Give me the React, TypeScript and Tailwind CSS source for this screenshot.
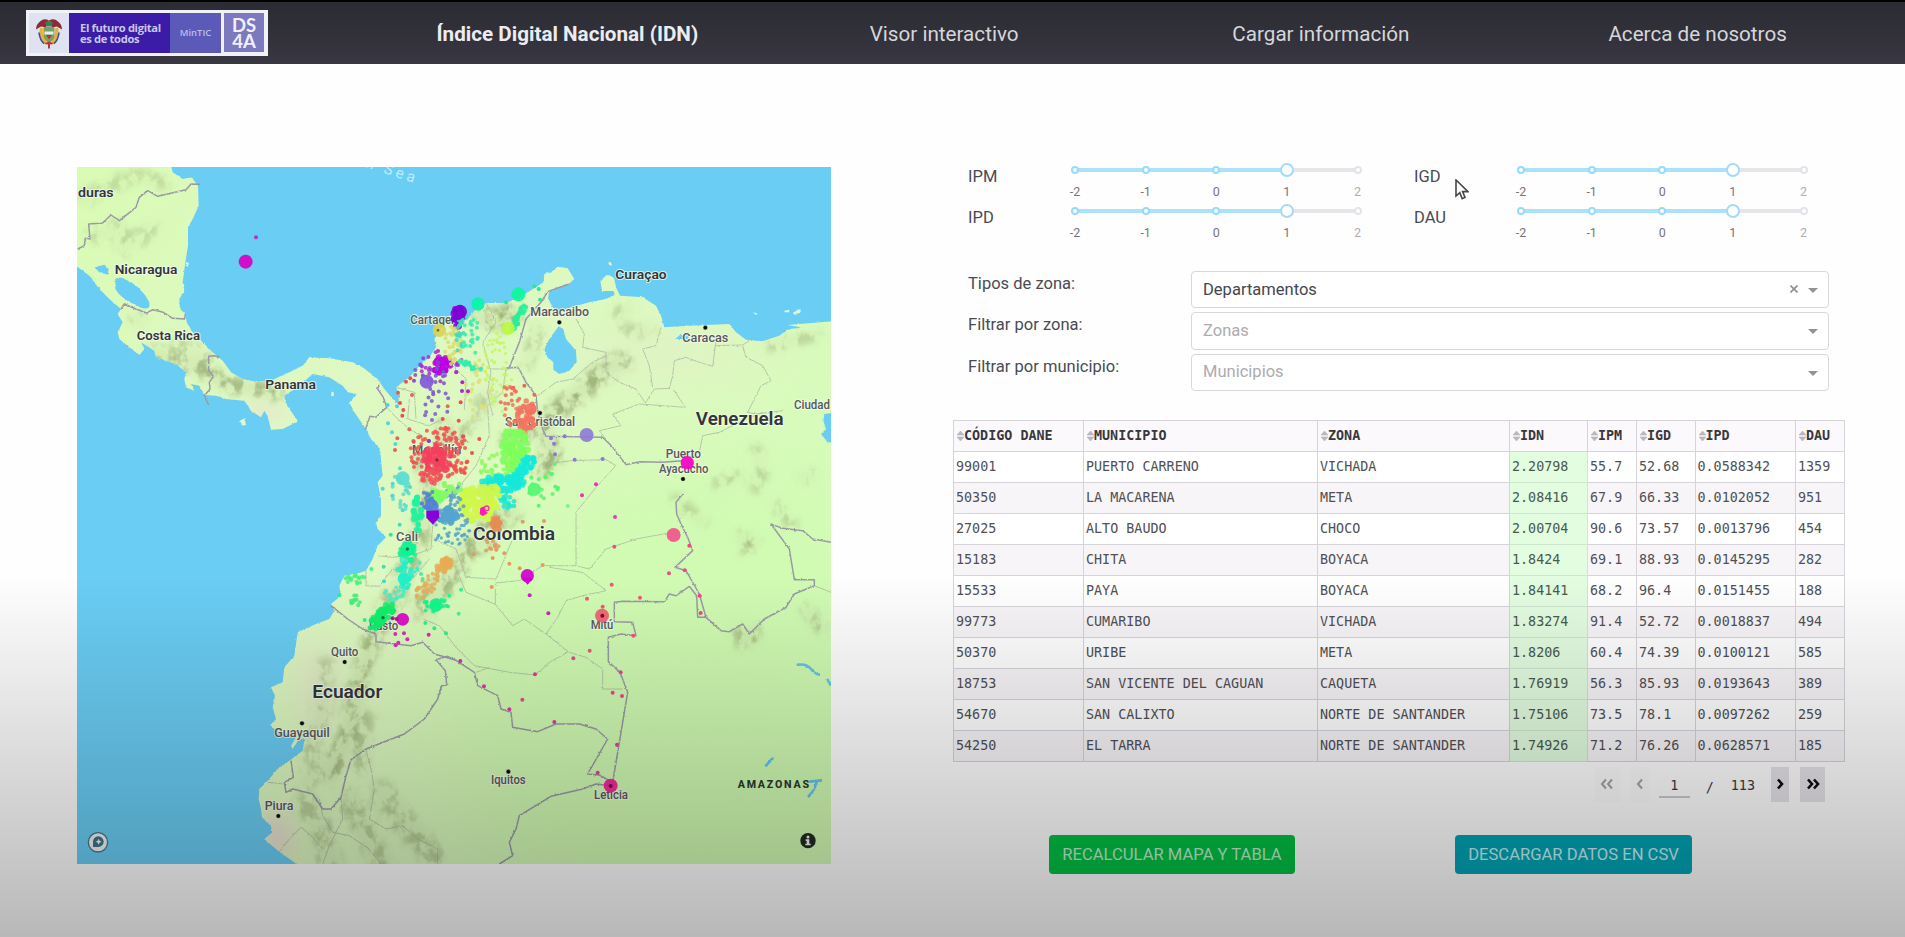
import React from "react";

const SANS = "font-['Roboto','Liberation_Sans',sans-serif]";
const MONO = "font-['DejaVu_Sans_Mono','Liberation_Mono',monospace]";

/* ---------- Map data (3 units per pixel) ---------- */

const LAND =
  "M0 0H285L290 20 320 40 345 35 358 50 366 62 368 120 350 160 336 185 336 240 328 290 320 350 325 375 310 400 312 430 328 445 332 470 350 500 385 535 410 560 440 585 465 620 500 640 540 648 590 642 640 620 680 600 700 575 760 578 830 590 860 605 905 640 925 670 950 700 965 715 972 690 960 665 1000 635 1030 600 1060 575 1080 545 1075 520 1085 500 1100 470 1120 450 1140 462 1170 465 1200 430 1230 412 1290 412 1330 395 1380 365 1402 350 1405 325 1425 320 1445 303 1475 308 1495 340 1478 355 1420 375 1416 398 1430 425 1445 440 1475 428 1540 410 1590 400 1618 388 1612 376 1578 376 1573 345 1592 328 1614 335 1620 365 1632 390 1700 395 1740 420 1755 450 1765 485 1840 480 1960 475 1980 500 2010 522 2060 527 2110 510 2140 490 2180 486 2135 478 2270 467V2100H665L655 2090 610 2058 565 2020 590 2000 585 1980 558 1955 555 1930 548 1900 550 1870 575 1845 610 1805 640 1785 680 1755 686 1718 668 1722 650 1750 645 1740 660 1715 600 1695 583 1678 600 1660 590 1625 597 1590 585 1565 620 1550 625 1505 655 1470 665 1400 720 1375 760 1360 775 1335 765 1315 795 1290 790 1260 805 1230 850 1222 870 1215 890 1180 905 1140 930 1115 905 1090 900 1070 915 1050 915 1000 905 950 920 930 912 850 885 820 870 790 835 740 820 710 845 685 815 680 800 660 760 635 710 625 670 660 625 690 630 715 665 765 650 775 620 790 585 792 575 750 565 735 555 755 525 735 505 705 450 700 420 690 385 688 370 660 345 655 355 675 330 665 325 640 330 620 300 595 240 575 235 555 195 530 205 550 190 568 160 545 130 520 125 500 140 470 125 445 135 430 100 400 70 370 40 330 0 300Z";

const LAKES = [
  "M118 340Q130 330 150 342Q195 360 220 410V425Q205 435 180 418Q135 400 118 370Z",
  "M55 305 85 297 98 310 95 327 70 320Z",
  "M1448 482 1462 490 1470 520 1500 555 1502 590 1480 615 1450 625 1432 612 1432 590 1410 570 1405 550 1420 520Z",
  "M1798 520 1812 508 1840 510 1835 520Z",
  "M2245 745 2270 742V830H2255L2235 805 2250 790 2242 765Z",
];

const ISLANDS = [
  "M492 765 505 758 510 778 500 780Z",
  "M766 678 773 680 774 690 766 692Z",
  "M331 288 338 292 336 303 329 300Z",
  "M2150 442 2170 430 2175 438 2158 448Z",
  "M2125 435 2140 432 2140 440 2126 440Z",
  "M1596 290 1605 291 1608 300 1600 298Z",
  "M2030 440 2045 444 2040 448Z",
  "M140 386 158 394 156 399 143 391Z",
];

const BORDERS = [
  "M5 250 25 240 28 218 42 220 38 175 80 172 105 148 130 165 180 125 190 95 215 75 245 92 330 72 345 55 372 56",
  "M135 430 145 415 180 430 212 442 230 432 262 440 290 458 325 460 328 445",
  "M430 575 415 570 398 572 398 615 412 632 400 650 402 670 385 690 398 718",
  "M910 657 905 670 922 695 932 725 915 740 900 755 882 752 868 792",
  "M1478 355 1415 378 1395 410 1350 460 1330 530 1300 605 1290 608 1325 605 1335 620 1350 650 1380 690 1385 740 1400 790 1410 812 1580 815 1610 845 1650 897 1690 888 1760 890 1820 885",
  "M1820 985 1800 1010 1802 1045 1815 1075 1835 1115 1850 1155 1797 1205 1830 1215 1870 1285 1890 1355 1935 1395 1960 1398 2000 1375 2020 1405 2065 1360 2130 1325 2155 1285 2215 1260V1242H2155L2140 1150 2085 1075 2120 1088 2180 1095 2210 1120 2265 1130",
  "M1890 1355 1865 1355 1862 1290 1840 1262 1800 1290 1780 1285 1765 1308 1640 1307 1615 1310V1368L1670 1370 1680 1410 1635 1405 1597 1415V1488L1632 1520 1655 1580 1610 1850",
  "M765 1320 815 1360 860 1390 900 1405 900 1428 960 1435 1005 1440 1040 1430 1075 1465 1140 1484 1195 1520 1205 1560 1265 1590 1275 1630 1305 1640 1310 1685 1385 1698 1440 1675 1510 1675 1560 1690 1595 1720 1535 1825 1570 1828 1600 1845 1605 1860",
  "M1605 1860 1560 1855 1520 1870 1425 1892 1330 1950 1320 1990 1300 2030 1310 2070 1270 2095",
  "M1080 1482 1108 1515 1112 1558 1097 1560 1085 1600 1045 1660 985 1705 870 1750 825 1782 810 1830 795 1895 765 1930 740 1930 710 1885 650 1870 630 1880 625 1850 652 1835 645 1785M1080 1482 1115 1472 1140 1484",
];

const REGIONS = [
  "M1500 460 1525 505 1520 545 1590 560 1590 620 1630 650 1680 670 1708 712 1735 670 1780 668 1790 630 1795 585 1830 575 1870 590 1910 602 1918 540 1920 525",
  "M1755 485 1740 540 1700 550 1720 600 1730 665",
  "M1790 668 1828 725 1760 720 1690 715 1610 745 1635 780 1570 795 1610 845",
  "M2000 540 2010 575 2060 600 2085 645 2055 660 2015 740 2040 745 2120 735",
  "M1918 540 2000 538 2020 525",
  "M2060 740 2010 760 1930 800 1880 810 1870 860 1830 880",
  "M1400 895 1490 885 1590 882 1620 900 1560 965 1500 1040 1500 1200",
  "M932 725 965 760 1000 790 1060 825 1095 840 1130 810 1180 830",
  "M1000 700 995 760 1060 780 1090 765",
  "M1230 412 1260 470 1220 530 1245 620 1235 680 1250 750",
  "M1290 610 1280 680 1235 720 1240 810 1200 900 1160 950 1150 1040",
  "M1385 690 1440 650 1490 640 1550 590 1590 570",
  "M905 1170 950 1175 1020 1165 1065 1150 1070 1080 1110 1040",
  "M870 1215 870 1260 910 1262 950 1210 1010 1240 1060 1180",
  "M1075 1120 1140 1150 1170 1235 1260 1240 1310 1120",
  "M1140 1210 1170 1280 1258 1316 1310 1380 1345 1360 1410 1405 1445 1355 1470 1305 1520 1290 1590 1275 1520 1220 1420 1205",
  "M1258 1316V1252L1330 1245 1400 1200 1500 1200 1540 1210 1590 1150 1680 1120 1790 1100",
  "M1410 1405 1480 1460 1530 1475 1580 1510 1580 1570 1640 1570",
  "M1140 1445 1195 1500 1300 1520 1380 1528 1420 1490 1475 1460",
  "M1200 1520 1240 1505",
  "M1040 1360 1090 1380 1140 1445",
  "M870 1750 885 1810 895 1870 880 1960 930 1990 980 1980 1025 2020 1085 2050V2095",
  "M795 1895 800 1960 760 2040 740 2095M610 2058 640 2020 675 1985 705 2010 740 2050M575 1850 620 1855",
  "M730 1900 740 1950 770 2000 820 2010 880 2050 915 2095M2215 1260 2265 1280",
  "M960 665 1015 680 1020 760M1120 590 1170 640 1165 730M1235 610 1300 610",
];

const RELIEF = [
  { d: "M230 565 300 580 350 595 400 625 450 655 520 665 600 680", w: 44, o: 0.9 },
  { d: "M300 530 370 560 400 590M175 455 190 470", w: 30, o: 0.6 },
  { d: "M1300 820 1390 780 1440 735 1500 690 1560 640 1600 600 1640 590", w: 56, o: 1 },
  { d: "M1350 600 1370 540 1390 490", w: 30, o: 0.7 },
  { d: "M1225 455 1270 465 1310 445", w: 64, o: 1 },
  { d: "M1400 910 1430 880 1420 820", w: 56, o: 1 },
  { d: "M1040 1330 1100 1260 1160 1170 1220 1110 1300 1040", w: 66, o: 0.9 },
  { d: "M920 1360 970 1260 1010 1170 1040 1080 1060 960 1050 880", w: 56, o: 0.85 },
  { d: "M1100 780 1110 840 1200 760 1230 690", w: 50, o: 0.5 },
  { d: "M900 1390 870 1480 850 1540 835 1620 820 1700 790 1760 765 1830", w: 52, o: 0.9 },
  { d: "M750 1500 740 1640 700 1760M690 1850 730 1790M870 1660 850 1800", w: 50, o: 0.55 },
  { d: "M690 1920 740 1990 760 2090M820 1900 870 2000 920 2090M920 1880 1000 1990 1070 2070", w: 70, o: 0.55 },
  { d: "M2080 540 2220 510M1620 440 1660 430M1640 490 1720 500", w: 28, o: 0.6 },
  { d: "M2040 850 2060 920 2040 970M1920 950 1990 935M1800 1000 1880 1070M2100 1020 2150 1080M2180 935 2210 930", w: 30, o: 0.55 },
  { d: "M2000 1110 2010 1155 2035 1130M1980 1400 2040 1395M1990 1430 2040 1425M2190 1330 2240 1390", w: 26, o: 0.85 },
  { d: "M20 100 100 60 180 30 260 50M50 210 110 200 200 220M120 180 150 250M190 210 230 190", w: 44, o: 0.4 },
];

type Cluster = { x: number; y: number; rx: number; ry: number; n: number; r: number; c: string; rot?: number };

const CLUSTERS: Cluster[] = [
  { x: 1090, y: 865, rx: 92, ry: 82, n: 130, r: 6, c: "#f0524f" },
  { x: 1082, y: 880, rx: 42, ry: 40, n: 60, r: 8, c: "#f4405e" },
  { x: 1075, y: 930, rx: 45, ry: 24, n: 24, r: 7, c: "#f2525a" },
  { x: 1098, y: 598, rx: 26, ry: 28, n: 34, r: 9, c: "#bb00e4" },
  { x: 1100, y: 605, rx: 72, ry: 48, n: 24, r: 6, c: "#a32ddb" },
  { x: 1065, y: 650, rx: 66, ry: 64, n: 16, r: 6, c: "#7c4fd0" },
  { x: 1085, y: 720, rx: 48, ry: 48, n: 12, r: 6, c: "#7a58d0" },
  { x: 1145, y: 455, rx: 16, ry: 30, n: 20, r: 9, c: "#8a00d8" },
  { x: 1130, y: 540, rx: 28, ry: 58, n: 34, r: 6, c: "#d9dc70" },
  { x: 1150, y: 510, rx: 14, ry: 50, n: 16, r: 6, c: "#3fdcb8" },
  { x: 1185, y: 500, rx: 36, ry: 66, n: 24, r: 6, c: "#35edb0" },
  { x: 1187, y: 602, rx: 42, ry: 8, n: 24, r: 6, c: "#35ecac", rot: 24 },
  { x: 1328, y: 455, rx: 50, ry: 9, n: 26, r: 7, c: "#25f09a", rot: -62 },
  { x: 1210, y: 670, rx: 42, ry: 90, n: 26, r: 6, c: "#dfe078" },
  { x: 1265, y: 610, rx: 44, ry: 150, n: 56, r: 5, c: "#c8f56a" },
  { x: 1298, y: 690, rx: 34, ry: 30, n: 14, r: 6, c: "#ee6b55" },
  { x: 1350, y: 750, rx: 30, ry: 48, n: 38, r: 8, c: "#f37562" },
  { x: 1325, y: 745, rx: 48, ry: 40, n: 12, r: 6, c: "#f37562" },
  { x: 1315, y: 850, rx: 42, ry: 66, n: 90, r: 9, c: "#7eff5c" },
  { x: 1265, y: 905, rx: 62, ry: 44, n: 40, r: 6, c: "#8dfa60" },
  { x: 1345, y: 905, rx: 64, ry: 18, n: 55, r: 8, c: "#14eadb", rot: -52 },
  { x: 1280, y: 952, rx: 64, ry: 22, n: 64, r: 9, c: "#14e8da" },
  { x: 1298, y: 995, rx: 30, ry: 34, n: 26, r: 7, c: "#1de8d2" },
  { x: 1205, y: 1018, rx: 58, ry: 54, n: 95, r: 10, c: "#d0f84a" },
  { x: 1240, y: 980, rx: 36, ry: 28, n: 26, r: 9, c: "#cdf650" },
  { x: 1132, y: 1000, rx: 38, ry: 50, n: 36, r: 6, c: "#5aa0c6" },
  { x: 1115, y: 1050, rx: 34, ry: 26, n: 30, r: 8, c: "#55a5cf" },
  { x: 1125, y: 1090, rx: 64, ry: 50, n: 46, r: 5, c: "#5ba3c4" },
  { x: 1085, y: 990, rx: 28, ry: 20, n: 26, r: 9, c: "#7dff62" },
  { x: 1125, y: 965, rx: 32, ry: 22, n: 14, r: 7, c: "#8cf66a" },
  { x: 1055, y: 1002, rx: 22, ry: 32, n: 24, r: 6, c: "#5583cf" },
  { x: 1025, y: 1045, rx: 14, ry: 52, n: 34, r: 8, c: "#1df3a0" },
  { x: 978, y: 975, rx: 32, ry: 60, n: 20, r: 6, c: "#5edbd0" },
  { x: 995, y: 1160, rx: 24, ry: 30, n: 30, r: 7, c: "#1cf098" },
  { x: 985, y: 1230, rx: 24, ry: 42, n: 34, r: 7, c: "#25efc4" },
  { x: 1000, y: 1190, rx: 32, ry: 40, n: 14, r: 6, c: "#3decc8" },
  { x: 958, y: 1285, rx: 34, ry: 26, n: 20, r: 6, c: "#4decc4" },
  { x: 1105, y: 1200, rx: 28, ry: 18, n: 22, r: 8, c: "#e6ae58", rot: -40 },
  { x: 1055, y: 1260, rx: 52, ry: 22, n: 36, r: 6, c: "#e3b05c", rot: -50 },
  { x: 1262, y: 1075, rx: 18, ry: 24, n: 20, r: 8, c: "#e5935c" },
  { x: 1235, y: 1140, rx: 36, ry: 18, n: 12, r: 6, c: "#e39a62" },
  { x: 918, y: 1350, rx: 52, ry: 20, n: 62, r: 8, c: "#10f06c", rot: -48 },
  { x: 840, y: 1240, rx: 36, ry: 14, n: 16, r: 6, c: "#45f27c" },
  { x: 840, y: 1305, rx: 18, ry: 18, n: 10, r: 6, c: "#40f078" },
  { x: 1080, y: 1320, rx: 40, ry: 24, n: 16, r: 6, c: "#1cf28c" },
  { x: 1400, y: 960, rx: 46, ry: 50, n: 16, r: 6, c: "#58f46c" },
];

const BUBBLES: [number, number, number, string][] = [
  [509, 288, 21, "#d900c4"], [1152, 438, 21, "#7d00d6"], [1145, 450, 14, "#7d00d6"], [1206, 415, 20, "#0af3ac"],
  [1327, 386, 21, "#0cf79a"], [1090, 494, 20, "#d6d45a"], [1296, 488, 20, "#bdf847"], [1052, 648, 21, "#8359dc"],
  [1364, 730, 18, "#f37161"], [1532, 808, 21, "#8f7cd3"], [1834, 891, 20, "#fa00c6"], [980, 938, 21, "#5adbd2"],
  [1375, 971, 20, "#55f771"], [1067, 1022, 21, "#5280d4"], [1112, 1052, 18, "#56a4cf"], [995, 1150, 22, "#10f293"],
  [983, 1240, 18, "#20f0c6"], [1110, 1192, 18, "#e6ab54"], [1080, 1318, 20, "#0cf78c"], [980, 1361, 19, "#dd04c6"],
  [1354, 1230, 20, "#d400d1"], [1793, 1108, 21, "#f1568c"], [1578, 1350, 21, "#f35f72"], [1604, 1860, 21, "#f31c98"],
  [1260, 1072, 17, "#e58c55"],
];

const DOTS: [number, number, string][] = [
  [540, 215, "#c02fc4"], [990, 648, "#e85252"], [1003, 638, "#e85252"], [966, 681, "#e2604f"], [972, 712, "#e85252"],
  [982, 733, "#e85252"], [979, 750, "#e85252"], [1008, 688, "#e76650"], [1100, 760, "#e85252"], [1115, 722, "#e6724c"],
  [1000, 791, "#e6655a"], [964, 818, "#e6655a"], [957, 853, "#e6655a"], [936, 773, "#55d8d2"], [948, 800, "#55d8d2"],
  [958, 835, "#55d8d2"], [972, 908, "#55d8d2"], [950, 954, "#55d8d2"], [950, 990, "#55d8d2"], [920, 969, "#55d8d2"],
  [980, 1034, "#55d8d2"], [1002, 964, "#55d8d2"], [935, 718, "#55cfe2"], [963, 722, "#55cfe2"], [1013, 828, "#e85252"],
  [1014, 645, "#9b45d4"], [1086, 556, "#b634cf"], [1159, 650, "#a22dc9"], [1158, 676, "#a22dc9"], [1176, 677, "#a22dc9"],
  [1154, 710, "#e85252"], [1148, 765, "#e85252"], [1162, 812, "#e85252"], [1152, 845, "#e85252"], [1210, 820, "#ea5550"],
  [1188, 862, "#ea5550"], [1172, 890, "#ea5550"], [1166, 922, "#ea5550"], [1345, 660, "#ef6a55"], [1375, 687, "#ef6a55"],
  [1312, 666, "#ef6a55"], [1375, 362, "#23eb9b"], [1388, 370, "#23eb9b"], [1392, 402, "#23eb9b"], [1290, 410, "#23eb9b"],
  [1425, 818, "#8c79d5"], [1434, 834, "#8c79d5"], [1437, 866, "#8c79d5"], [1466, 812, "#8c79d5"], [1496, 882, "#8c79d5"],
  [1580, 880, "#8c79d5"], [1560, 956, "#ec32b8"], [1518, 989, "#ec32b8"], [1617, 1054, "#e93cae"], [1438, 963, "#55f771"],
  [1446, 966, "#55f771"], [1475, 1021, "#7ef28c"], [1388, 1020, "#55f771"], [1425, 925, "#55f771"], [1436, 895, "#55f771"],
  [1361, 1289, "#c428bf"], [1417, 1343, "#c428bf"], [1340, 1068, "#e59a62"], [1404, 1066, "#e59a62"], [1400, 1198, "#e59a62"],
  [1285, 1163, "#e59a62"], [1300, 1194, "#e59a62"], [1331, 1208, "#e59a62"], [1250, 1177, "#e59a62"], [1193, 1166, "#e59a62"],
  [1247, 1264, "#e59a62"], [1155, 1272, "#2cf595"], [1148, 1344, "#4af0a4"], [1120, 1290, "#2cf595"], [1615, 1143, "#e8508f"],
  [1840, 1140, "#ea4b85"], [1826, 1214, "#ea4b85"], [1779, 1223, "#ea4b85"], [1871, 1290, "#ea4b85"], [1874, 1342, "#ea4b85"],
  [1607, 1257, "#ee5a75"], [1533, 1299, "#ee5a75"], [1692, 1296, "#ee5a75"], [1580, 1323, "#ee5a75"], [1672, 1410, "#ee5a75"],
  [1541, 1455, "#ee5a75"], [1492, 1478, "#e84a8b"], [1377, 1526, "#e03c93"], [1634, 1520, "#e84a8b"], [1610, 1581, "#e84a8b"],
  [1638, 1591, "#e84a8b"], [1224, 1562, "#db3ca2"], [1339, 1602, "#e2508c"], [1300, 1631, "#db3ca2"], [1435, 1669, "#db3ca2"],
  [1623, 1737, "#e2428f"], [1565, 1821, "#e2428f"], [1153, 1486, "#c836b4"], [958, 1405, "#d532b4"], [984, 1403, "#d532b4"],
  [994, 1421, "#d532b4"], [967, 1431, "#d532b4"], [959, 1439, "#d532b4"], [1058, 1407, "#d532b4"], [950, 1358, "#b014a0"],
  [962, 1360, "#b014a0"], [923, 1203, "#3de0bc"], [924, 1247, "#3de0bc"], [886, 1210, "#45ef9c"], [944, 1107, "#3de09c"],
  [971, 1077, "#3de0bc"], [1035, 1225, "#5ae6a8"], [1040, 1240, "#5ae6a8"], [790, 1288, "#2ff28a"], [866, 1363, "#2ff28a"],
  [1075, 1388, "#2ff28a"], [1110, 1403, "#2ff28a"], [1048, 1372, "#2ff28a"],
];

type Place = { t: string; x: number; y: number; s: number; k: "country" | "city"; a?: "start" | "middle" | "end"; len?: number };
const PLACES: Place[] = [
  { t: "duras", x: 6, y: 93, s: 41, k: "country", a: "start", len: 107 },
  { t: "Nicaragua", x: 210, y: 325, s: 41, k: "country", len: 188 },
  { t: "Costa Rica", x: 277, y: 522, s: 41, k: "country", len: 190 },
  { t: "Panama", x: 644, y: 670, s: 41, k: "country", len: 152 },
  { t: "Curaçao", x: 1695, y: 341, s: 41, k: "country", len: 154 },
  { t: "Venezuela", x: 1991, y: 777, s: 56, k: "country", len: 263 },
  { t: "Colombia", x: 1314, y: 1123, s: 56, k: "country", len: 246 },
  { t: "Ecuador", x: 814, y: 1596, s: 56, k: "country", len: 210 },
  { t: "Maracaibo", x: 1451, y: 450, s: 37, k: "city", len: 176 },
  { t: "Caracas", x: 1888, y: 528, s: 37, k: "city", len: 138 },
  { t: "Cartagena", x: 1003, y: 474, s: 37, k: "city", a: "start", len: 160 },
  { t: "San Cristóbal", x: 1392, y: 780, s: 37, k: "city", len: 210 },
  { t: "Ciudad", x: 2154, y: 730, s: 37, k: "city", a: "start", len: 108 },
  { t: "Puerto", x: 1822, y: 876, s: 37, k: "city", len: 106 },
  { t: "Ayacucho", x: 1823, y: 922, s: 37, k: "city", len: 148 },
  { t: "Medellín", x: 1082, y: 864, s: 37, k: "city", len: 148 },
  { t: "Cali", x: 993, y: 1127, s: 37, k: "city", len: 66 },
  { t: "Pasto", x: 923, y: 1393, s: 37, k: "city", len: 88 },
  { t: "Quito", x: 806, y: 1470, s: 37, k: "city", len: 82 },
  { t: "Guayaquil", x: 678, y: 1714, s: 37, k: "city", len: 166 },
  { t: "Piura", x: 609, y: 1933, s: 37, k: "city", len: 86 },
  { t: "Mitú", x: 1578, y: 1390, s: 37, k: "city", len: 68 },
  { t: "Iquitos", x: 1297, y: 1856, s: 37, k: "city", len: 104 },
  { t: "Leticia", x: 1605, y: 1900, s: 37, k: "city", len: 102 },
];

const TOWNS: [number, number][] = [
  [1450, 470], [1888, 486], [1392, 742], [1821, 940], [806, 1489], [678, 1673], [607, 1951], [1297, 1818],
];

function clusterDots(c: Cluster, seed: number) {
  let s = seed * 7919 + 13;
  const rnd = () => {
    s = (s * 1103515245 + 12345) % 2147483648;
    return s / 2147483648;
  };
  rnd();
  const t = ((c.rot ?? 0) * Math.PI) / 180;
  return Array.from({ length: c.n }, () => {
    const a = rnd() * Math.PI * 2;
    const d = Math.pow(rnd(), 0.52);
    const u = Math.cos(a) * d * c.rx;
    const v = Math.sin(a) * d * c.ry;
    return [c.x + u * Math.cos(t) - v * Math.sin(t), c.y + u * Math.sin(t) + v * Math.cos(t)];
  });
}

function ColombiaMap() {
  return (
    <svg viewBox="3 4 2262 2091" className="block h-[697px] w-[754px]" preserveAspectRatio="none">
      <defs>
        <linearGradient id="land" gradientUnits="userSpaceOnUse" x1="0" y1="0" x2="2265" y2="1200">
          <stop offset="0" stopColor="#d9fcb4" />
          <stop offset="0.3" stopColor="#def8c2" />
          <stop offset="0.75" stopColor="#dcfabf" />
          <stop offset="1" stopColor="#d4fcb8" />
        </linearGradient>
        <radialGradient id="jungle" gradientUnits="userSpaceOnUse" cx="1800" cy="1600" r="900">
          <stop offset="0" stopColor="#d0fbb2" />
          <stop offset="0.6" stopColor="#d0fbb2" stopOpacity="0.85" />
          <stop offset="1" stopColor="#d0fbb2" stopOpacity="0" />
        </radialGradient>
        <radialGradient id="dry">
          <stop offset="0" stopColor="#eadfd2" />
          <stop offset="1" stopColor="#eadfd2" stopOpacity="0" />
        </radialGradient>
        <filter id="rough" x="-5%" y="-5%" width="110%" height="110%">
          <feTurbulence type="fractalNoise" baseFrequency="0.11" numOctaves="2" seed="4" result="n" />
          <feDisplacementMap in="SourceGraphic" in2="n" scale="7" xChannelSelector="R" yChannelSelector="G" />
        </filter>
        <filter id="hills" filterUnits="userSpaceOnUse" x="0" y="0" width="2270" height="2100" colorInterpolationFilters="sRGB">
          <feGaussianBlur in="SourceGraphic" stdDeviation="12" result="area" />
          <feTurbulence type="fractalNoise" baseFrequency="0.03 0.022" numOctaves="4" seed="11" result="n" />
          <feColorMatrix
            in="n"
            type="matrix"
            values="0 0 0 0 0.63  0 0 0 0 0.71  0 0 0 0 0.49  4.4 0 0 0 -1.95"
            result="ridges"
          />
          <feComposite in="ridges" in2="area" operator="in" result="shade" />
          <feColorMatrix in="area" type="matrix" values="0 0 0 0 0.79  0 0 0 0 0.87  0 0 0 0 0.66  0 0 0 0.55 0" result="tint" />
          <feMerge>
            <feMergeNode in="tint" />
            <feMergeNode in="shade" />
          </feMerge>
        </filter>
        <clipPath id="landClip">
          <path d={LAND} />
        </clipPath>
      </defs>
      <rect width="2270" height="2100" fill="#6acdf4" />
      <g filter="url(#rough)">
        <path d={LAND} fill="url(#land)" />
        <path d={LAND} fill="url(#jungle)" />
        {ISLANDS.map((d) => (
          <path key={d} d={d} fill="#e2f7cf" />
        ))}
      </g>
      <g clipPath="url(#landClip)">
        <ellipse cx="600" cy="2010" rx="90" ry="110" fill="url(#dry)" />
        <ellipse cx="720" cy="1560" rx="110" ry="200" fill="url(#dry)" opacity="0.45" />
        <ellipse cx="560" cy="740" rx="110" ry="60" fill="url(#dry)" opacity="0.5" />
        <ellipse cx="1780" cy="560" rx="420" ry="160" fill="url(#dry)" opacity="0.25" />
        <g filter="url(#hills)" fill="none" strokeLinecap="round" strokeLinejoin="round">
          {RELIEF.map((r) => (
            <path key={r.d} d={r.d} stroke="#fff" strokeWidth={r.w} strokeOpacity={r.o} />
          ))}
        </g>
      </g>
      <g filter="url(#rough)" fill="none" strokeLinejoin="round">
        {LAKES.map((d) => (
          <path key={d} d={d} fill="#6acdf4" />
        ))}
        {REGIONS.map((d) => (
          <path key={d} d={d} stroke="#a9b5a2" strokeOpacity="0.75" strokeWidth="3" />
        ))}
        {BORDERS.map((d) => (
          <path key={d} d={d} stroke="#9a9aa5" strokeWidth="4.5" />
        ))}
        <path
          d="M2162 1498Q2190 1492 2205 1510T2232 1527M2254 1540 2265 1560M2092 1775 2068 1802M2200 1848 2238 1844M2222 1846Q2220 1870 2196 1894"
          stroke="#62c4ea"
          strokeWidth="8"
        />
      </g>

      <g fontFamily="Roboto, 'Liberation Sans', sans-serif" strokeLinejoin="round" paintOrder="stroke">
        {PLACES.map((p) => (
          <text
            key={p.t}
            x={p.x}
            y={p.y}
            fontSize={p.s}
            fontWeight={p.k === "country" ? 600 : 500}
            fill={p.k === "country" ? "#33353c" : "#56585c"}
            stroke="#f2fae6"
            strokeOpacity="0.8"
            strokeWidth="6"
            textAnchor={p.a ?? "middle"}
            textLength={p.len}
            lengthAdjust="spacingAndGlyphs"
          >
            {p.t}
          </text>
        ))}
        <text x="1985" y="1867" fontSize="32" fontWeight="800" fill="#2c3a30" textLength="214">
          AMAZONAS
        </text>
        <text x="866" y="4" fontSize="46" fill="#c3e9fa" letterSpacing="10" transform="rotate(18 866 4)">
          n Sea
        </text>
      </g>
      {TOWNS.map(([x, y]) => (
        <circle key={x} cx={x} cy={y} r="7" fill="#0c0d0c" stroke="#eef8e0" strokeWidth="1.5" />
      ))}

      {CLUSTERS.map((c, i) => (
        <g key={i} fill={c.c} fillOpacity="0.85">
          {clusterDots(c, i + 1).map(([x, y], j) => (
            <circle key={j} cx={x} cy={y} r={c.r} />
          ))}
        </g>
      ))}
      {BUBBLES.map(([x, y, r, c]) => (
        <circle key={`${x}-${y}`} cx={x} cy={y} r={r} fill={c} fillOpacity="0.93" />
      ))}
      {DOTS.map(([x, y, c]) => (
        <circle key={`${x}-${y}`} cx={x} cy={y} r="6" fill={c} />
      ))}
      <path d="M1051 1036 1088 1034 1090 1055 1071 1077 1051 1056Z" fill="#8a00da" />
      <path d="M1338 1238H1370L1355 1257Z" fill="#d400d1" />
      <path d="M1213 1027 1225 1022 1229 1037 1236 1042 1220 1051 1211 1045Z" fill="#ff16c0" />
      <circle cx="1232" cy="1028" r="7" fill="none" stroke="#ff2fae" strokeWidth="4" />
      <circle cx="1083" cy="883" r="5" fill="#9c1f2d" />
      <circle cx="1086" cy="494" r="4" fill="#7d6a20" />
      <circle cx="1059" cy="826" r="6" fill="#8a3fc9" />
      <circle cx="994" cy="1150" r="5" fill="#0a7a45" />
      <circle cx="921" cy="1356" r="5" fill="#087a38" />
      <circle cx="1579" cy="1350" r="6" fill="#7a1028" />
      <circle cx="1604" cy="1861" r="6" fill="#7a0046" />
      <g>
        <circle cx="66" cy="2030" r="29" fill="#f0f5f5" stroke="#47788c" strokeWidth="4" />
        <path d="M51 2044V2029A16 16 0 1 1 66 2044Z" fill="#3f7388" />
        <path d="M68 2019 71 2025 77 2028 71 2031 68 2037 65 2031 59 2028 65 2025Z" fill="#f0f5f5" />
      </g>
      <g>
        <circle cx="2196" cy="2025" r="23" fill="#1f2b22" />
        <circle cx="2196" cy="2014" r="4.5" fill="#eef5ea" />
        <path d="M2189 2021H2200V2034H2204V2039H2188V2034H2192V2026H2189Z" fill="#eef5ea" />
      </g>
    </svg>
  );
}

/* ---------- Header ---------- */

function CoatOfArms() {
  return (
    <svg viewBox="0 0 28 30" className="h-[31px] w-[28px]">
      <path d="M14 2Q9-1 5 3 1 6 1 11L6 8 11 9ZM14 2Q19-1 23 3 27 6 27 11L22 8 17 9Z" fill="#8d2a3a" />
      <path d="M5 9Q3 17 8 24L12 27 11 21Q7 17 8 10ZM23 9Q25 17 20 24L16 27 17 21Q21 17 20 10Z" fill="#e0b53c" />
      <path d="M4 14Q5 22 9 25M24 14Q23 22 19 25" stroke="#3a4f9c" strokeWidth="1.6" fill="none" />
      <path d="M9 9H19V18Q18 22 14 24 10 22 9 18Z" fill="#6fa56c" stroke="#b98a32" strokeWidth="1" />
      <path d="M9.5 13H18.5V16H9.5Z" fill="#e8ecf2" />
      <path d="M11 16.5H17L14 21Z" fill="#b7343f" />
      <path d="M10 4Q14 1 18 4L16 8H12Z" fill="#3d7f4c" />
      <path d="M9 25 14 23 19 25 15 26V30H13V26Z" fill="#b83442" />
    </svg>
  );
}

function Header() {
  return (
    <header className="flex h-16 items-center border-t-2 border-black bg-linear-to-b from-[#2b2b33] to-[#383742]">
      <div className="ml-[26px] flex h-[46px] w-[242px] items-stretch bg-[#f1f1f8] p-[3px]">
        <div className="flex w-[40px] items-center justify-center bg-[#dfe3f1]">
          <CoatOfArms />
        </div>
        <div className="flex w-[101px] flex-col justify-center bg-[#3a1ca6] pl-[11px] font-['Open_Sans','Noto_Sans',sans-serif] text-[11.2px] leading-[11px] font-bold tracking-[-0.35px] whitespace-nowrap text-[#c9c6ee]">
          <span>El futuro digital</span>
          <span>es de todos</span>
        </div>
        <div className="flex w-[51px] items-center justify-center bg-[#5c5ab9] font-['Open_Sans','Noto_Sans',sans-serif] text-[9.5px] font-semibold text-[#b9bdea]">
          MinTIC
        </div>
        <div className="ml-[3px] flex h-[39px] w-[40px] flex-col items-center justify-center bg-[#7d79bf] font-['Lato','Open_Sans',sans-serif] text-[18.5px] leading-[16px] font-bold text-[#f1f0fb]">
          <span>DS</span>
          <span>4A</span>
        </div>
      </div>
      <nav className="ml-[111px] grid w-[1507px] translate-y-px grid-cols-4 text-center text-[20.65px] leading-6 text-[#d6d6da]">
        <a className="font-bold text-[#ececf0]">Índice Digital Nacional (IDN)</a>
        <a>Visor interactivo</a>
        <a>Cargar información</a>
        <a>Acerca de nosotros</a>
      </nav>
    </header>
  );
}

/* ---------- Controls ---------- */

const MARKS = [-2, -1, 0, 1, 2];

function ScoreSlider({ label }: { label: string }) {
  return (
    <div className="flex h-[41.4px] pt-[4px] text-[16.55px] text-[#4a4b52]">
      <span className="w-[107px] pt-[0.5px] leading-6">{label}</span>
      <div className="relative w-[282.5px]">
        <div className="mt-[4px] h-1 rounded-full bg-[#e8e5ea]">
          <div className="h-1 w-3/4 rounded-full bg-[#abe2fb]" />
        </div>
        <div className="absolute inset-x-0 top-[-1px] flex h-[14px] items-center justify-between">
          {MARKS.map((m) => (
            <span key={m} className="flex w-0 justify-center">
              <span
                className={
                  m === 1
                    ? "size-[14px] shrink-0 rounded-full border-2 border-[#a3dbf7] bg-white"
                    : m === 2
                      ? "size-2 shrink-0 rounded-full border-2 border-[#e6e3e8] bg-white"
                      : "size-2 shrink-0 rounded-full border-2 border-[#96dbfa] bg-white"
                }
              />
            </span>
          ))}
        </div>
        <div className="mt-[10.5px] flex justify-between text-[12.5px] leading-[18px]">
          {MARKS.map((m) => (
            <span key={m} className={m === 2 ? "flex w-0 justify-center text-[#b0adb3]" : "flex w-0 justify-center text-[#77757b]"}>
              {m}
            </span>
          ))}
        </div>
      </div>
    </div>
  );
}

function Dropdown({ label, value, placeholder }: { label: string; value?: string; placeholder?: string }) {
  return (
    <div className="flex h-[41.4px] text-[16.55px]">
      <span className="w-[223px] pt-px leading-6 text-[#4a4b52]">{label}</span>
      <div className="flex h-[37.4px] w-[638px] items-center rounded-[4px] border border-[#d9d6dd] bg-white pr-[10px] pl-[11px]">
        <span className={value ? "flex-1 pt-px text-[#45464c]" : "flex-1 pt-px text-[#adabb0]"}>{value ?? placeholder}</span>
        {value && (
          <svg viewBox="0 0 8 8" className="mr-[10px] size-2">
            <path d="M.5.5 7.5 7.5M7.5.5.5 7.5" stroke="#8f8d92" strokeWidth="1.6" />
          </svg>
        )}
        <span className="mt-[2px] border-x-[5px] border-t-[5px] border-x-transparent border-t-[#949297]" />
      </div>
    </div>
  );
}

/* ---------- Table ---------- */

const COLUMNS = ["CÓDIGO DANE", "MUNICIPIO", "ZONA", "IDN", "IPM", "IGD", "IPD", "DAU"];
const ROWS = [
  ["99001", "PUERTO CARRENO", "VICHADA", "2.20798", "55.7", "52.68", "0.0588342", "1359"],
  ["50350", "LA MACARENA", "META", "2.08416", "67.9", "66.33", "0.0102052", "951"],
  ["27025", "ALTO BAUDO", "CHOCO", "2.00704", "90.6", "73.57", "0.0013796", "454"],
  ["15183", "CHITA", "BOYACA", "1.8424", "69.1", "88.93", "0.0145295", "282"],
  ["15533", "PAYA", "BOYACA", "1.84141", "68.2", "96.4", "0.0151455", "188"],
  ["99773", "CUMARIBO", "VICHADA", "1.83274", "91.4", "52.72", "0.0018837", "494"],
  ["50370", "URIBE", "META", "1.8206", "60.4", "74.39", "0.0100121", "585"],
  ["18753", "SAN VICENTE DEL CAGUAN", "CAQUETA", "1.76919", "56.3", "85.93", "0.0193643", "389"],
  ["54670", "SAN CALIXTO", "NORTE DE SANTANDER", "1.75106", "73.5", "78.1", "0.0097262", "259"],
  ["54250", "EL TARRA", "NORTE DE SANTANDER", "1.74926", "71.2", "76.26", "0.0628571", "185"],
];

const GRID = "grid grid-cols-[130px_234px_192px_78px_49px_58.5px_100.5px_49px]";

function SortIcon() {
  return (
    <svg viewBox="0 0 7 10" className="ml-px h-[10px] w-[7px]">
      <path d="M3.5 0 7 4H0ZM3.5 10 7 6H0Z" fill="#bab7bc" stroke="#bab7bc" strokeWidth="0.6" />
    </svg>
  );
}

function DataTable() {
  return (
    <div className={`${MONO} w-[892px] border-t border-l border-[#d6d3d9] text-[13.4px] text-[#505055]`}>
      <div className={`${GRID} h-[31px] bg-[#fbf9fc] font-bold text-[#39383d]`}>
        {COLUMNS.map((c) => (
          <div key={c} className="flex items-center border-r border-b border-[#d6d3d9] pl-[2px] whitespace-nowrap">
            <SortIcon />
            {c}
          </div>
        ))}
      </div>
      {ROWS.map((row, i) => (
        <div key={row[0]} className={i % 2 ? `${GRID} h-[30.98px] bg-[#f8f5f9]` : `${GRID} h-[30.98px] bg-white`}>
          {row.map((v, j) => (
            <div
              key={j}
              className={
                j === 3
                  ? "flex items-center border-r border-b border-[#cfe6cf] bg-[#e3fde1] pl-[2px] text-[#4a5a4c]"
                  : "flex items-center border-r border-b border-[#d6d3d9] pl-[2px] whitespace-nowrap"
              }
            >
              {v}
            </div>
          ))}
        </div>
      ))}
    </div>
  );
}

function Chevrons({ double, left, muted }: { double?: boolean; left?: boolean; muted?: boolean }) {
  return (
    <svg
      viewBox={double ? "0 0 14 12" : "0 0 8 12"}
      className={`${double ? "h-3 w-[14px]" : "h-3 w-2"} ${left ? "-scale-x-100" : ""}`}
    >
      <path
        d={double ? "M2 1.5 6 6 2 10.5M8 1.5 12 6 8 10.5" : "M2 1.5 6 6 2 10.5"}
        fill="none"
        stroke={muted ? "#a3a1a4" : "#0b0b0c"}
        strokeWidth={muted ? 2 : 2.6}
      />
    </svg>
  );
}

function Pagination() {
  return (
    <div className={`${MONO} mt-[5px] flex h-9 w-[872px] items-start justify-end text-[13.4px] text-[#3a393d]`}>
      <span className="flex h-[35px] w-[25px] items-center justify-center bg-black/[0.01]">
        <Chevrons double left muted />
      </span>
      <span className="ml-[11px] flex h-[35px] w-[18px] items-center justify-center bg-black/[0.01]">
        <Chevrons left muted />
      </span>
      <span className="mt-[8px] ml-[10px] h-[23px] w-[31px] border-b-2 border-[#cbc9cd] text-center leading-[22px]">1</span>
      <span className="mt-[9px] ml-[16px] leading-[23px]">/</span>
      <span className="mt-[8px] ml-[17px] leading-[22px]">113</span>
      <span className="ml-[16px] flex h-[35px] w-[18px] items-center justify-center bg-[#e6e3e8]">
        <Chevrons />
      </span>
      <span className="ml-[11px] flex h-[35px] w-[25px] items-center justify-center bg-[#e6e3e8]">
        <Chevrons double />
      </span>
    </div>
  );
}

export default function App() {
  return (
    <div className={`${SANS} relative h-[937px] w-full overflow-hidden bg-[#fefefe]`}>
      <Header />
      <main className="flex items-start pt-[96px] pl-[77px]">
        <div className="mt-[7px]">
          <ColombiaMap />
        </div>
        <section className="ml-[122px] w-[892px]">
          <div className="flex flex-wrap pl-[15px]">
            {["IPM", "IGD", "IPD", "DAU"].map((l, i) => (
              <div key={l} className={i % 2 ? "w-[430px]" : "w-[446px]"}>
                <ScoreSlider label={l} />
              </div>
            ))}
          </div>
          <div className="mt-[28px] pl-[15px]">
            <Dropdown label="Tipos de zona:" value="Departamentos" />
            <Dropdown label="Filtrar por zona:" placeholder="Zonas" />
            <Dropdown label="Filtrar por municipio:" placeholder="Municipios" />
          </div>
          <div className="mt-[25px]">
            <DataTable />
          </div>
          <Pagination />
          <div className="mt-[32px] flex pl-[96px] text-[16.6px]">
            <button className="h-[39px] w-[246px] rounded-[4px] bg-[#00c044] pt-[2px] whitespace-nowrap text-[#bdf0ce]">
              RECALCULAR MAPA Y TABLA
            </button>
            <button className="ml-[160px] h-[39px] w-[237px] rounded-[4px] bg-[#00a5b4] pt-[2px] whitespace-nowrap text-[#c5f0f5]">
              DESCARGAR DATOS EN CSV
            </button>
          </div>
        </section>
      </main>

      <div className="pointer-events-none absolute inset-x-0 top-[575px] bottom-0 bg-linear-to-b from-black/0 to-black/[0.275]" />
      <svg viewBox="0 0 14 21" className="absolute top-[179px] left-[1455px] h-[21px] w-[14px]">
        <path d="M1 1V17L4.8 13.6 7.2 19.6 10 18.4 7.6 12.6H13Z" fill="#fff" stroke="#48484c" strokeWidth="1.6" />
      </svg>
    </div>
  );
}
